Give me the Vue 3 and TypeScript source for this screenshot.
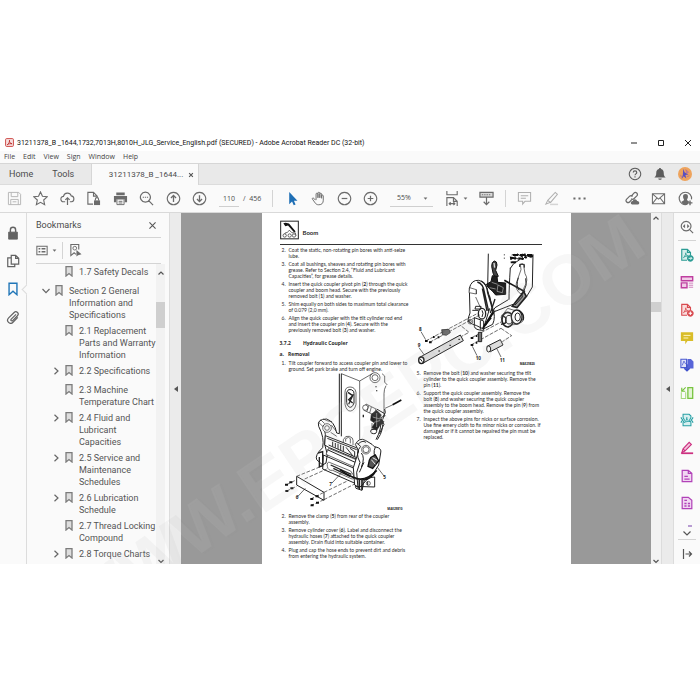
<script setup lang="ts">
import { ref } from 'vue'

interface Shape { d: string; fill?: string; stroke?: string; w?: number }
interface Tool { label: string; shapes: Shape[] }
interface Bookmark { text: string; level: number; arrow?: 'open' | 'closed' }
interface Step { n: number; html: string }

const G = '#6b6b6b'
const line = (d: string, w = 1.1, stroke = G): Shape => ({ d, stroke, w })
const solid = (d: string, fill = G): Shape => ({ d, fill })
const ring = 'M8 1.4a6.6 6.6 0 1 0 .01 0z'

const fileTools: Tool[] = [
  { label: 'Save', shapes: [line('M1.5 1.5h11l2 2v11h-13zM4.500 1.500v4.500h7v-4.500M4 14.500v-5.500h8v5.500M6 11.500h4', 1, '#b4b4b4')] },
  { label: 'Star', shapes: [line('M8 1l2.1 4.600 5 .6-3.700 3.400 1 5L8 12.100l-4.400 2.500 1-5L.9 6.200l5-.6z', 1.2)] },
  { label: 'Share to cloud', shapes: [line('M5.5 11.500H4a2.900 2.900 0 0 1-.3-5.800A4.300 4.300 0 0 1 12 5.200a3.200 3.200 0 0 1 .3 6.300h-1.800', 1.2), line('M8 15V7.500M5.700 9.500L8 7.200l2.300 2.300', 1.3)] },
  { label: 'Protect file', shapes: [line('M7.5 14h-5.500v-12.500h6l4 4v1.500M8 1.500V5.500h4', 1.2), solid('M8.5 10h6.500v5h-6.500z'), line('M10 10V8.800a1.700 1.700 0 0 1 3.400 0V10', 1.2)] },
  { label: 'Print', shapes: [solid('M3.500 1.500h9v3h-9zM1 5.200h14v6.800H12.500V9h-9v3H1z'), line('M4.200 9v5.500h7.600V9M6 11h4M6 12.800h4', 1)] },
  { label: 'Find', shapes: [line('M6.800 1.300a5.300 5.300 0 1 0 .01 0zM10.600 10.600l4.400 4.400', 1.3), solid('M4 6h1.300v1.300H4zM6.200 6h1.300v1.300H6.200zM8.400 6h1.300v1.300H8.400z')] },
  { label: 'Previous page', shapes: [line(ring, 1.2), line('M8 11.600V5M5.300 7.400L8 4.700l2.700 2.700', 1.4)] },
  { label: 'Next page', shapes: [line(ring, 1.2), line('M8 4.400V11M5.300 8.600L8 11.300l2.700-2.700', 1.4)] }
]
const viewTools: Tool[] = [
  { label: 'Select', shapes: [solid('M4.500 1v13l3-2.800 1.800 4 2-.9-1.800-3.900h3.800z', '#1f6fb5')] },
  { label: 'Hand', shapes: [line('M4.800 9.800L3 7.800C2 6.800.9 7.800 1.600 8.800l3 4.100c.9 1.300 2 1.800 3.700 1.800 3.300 0 4.800-1.900 4.800-4.800V5.300c0-1.300-1.800-1.300-1.800 0V8M11.300 7V3.300c0-1.300-1.900-1.300-1.900 0V7.500M9.400 7V2.300c0-1.300-2-1.300-2 0V7.500M7.400 7V3.200c0-1.300-2-1.300-2 0L5.400 9.500', 1)] },
  { label: 'Zoom out', shapes: [line(ring, 1.2), line('M5 8h6', 1.3)] },
  { label: 'Zoom in', shapes: [line(ring, 1.2), line('M5 8h6M8 5v6', 1.3)] }
]
const markTools: Tool[] = [
  { label: 'Comment', shapes: [line('M1.500 1.500h13v9.500H8.500l-2.500 3V11H1.500zM4 5h8M4 7.800h5.500', 1.1, '#b0b0b0')] },
  { label: 'Highlight', shapes: [line('M4 10L12 1.500l2.300 2-7.300 8.700zM4 10l-2 4L7 12', 1.1, '#b0b0b0'), line('M6.500 14.300h8.500', 1.6, '#d4d4d4')] },
  { label: 'More', shapes: [solid('M1.500 7h2.200v2H1.500zM6.900 7h2.200v2H6.900zM12.300 7h2.200v2h-2.200z')] }
]
const shareTools: Tool[] = [
  { label: 'Share link', shapes: [line('M7 9.500L4.800 11.700a2 2 0 0 1-3-3L5 5.500a2.100 2.100 0 0 1 3.200.3M6.500 5.800L9.500 2.300a2.100 2.100 0 0 1 3.100 2.900L9.500 8.300a2.100 2.100 0 0 1-3 0', 1.3), solid('M7.500 14.500a2 2 0 0 1 .6-3.900 2.600 2.600 0 0 1 4.900 0 2 2 0 0 1 .8 3.900z')] },
  { label: 'Mail', shapes: [line('M1.500 3h13v10.500h-13zM1.500 3L8 8.700 14.500 3M1.500 13.500l4.800-6M14.500 13.500L9.700 7.500', 1.1)] },
  { label: 'Add person', shapes: [line('M10 14.200A6.600 6.600 0 1 1 14.400 9', 1.2), solid('M8 3.300c2 0 2.800 1.400 2.600 3.200-.1 1.300-.6 1.900-.9 2.300v1l2 1-1 3c-3 1.300-5.200.4-7.300-2.200l2.900-1.700v-1.100c-.5-.5-.9-1.200-.9-2.300C5.200 4.700 6 3.300 8 3.300z'), line('M10.200 12.700h5.200M12.800 10.100v5.200', 1.5)] }
]

const acrobat = 'M4 11c2-2 3-5 2.600-5.500-.8 1 1 3.500 3 3.700-2-.2-4 .3-5.600 1.800z'
const sheetCorner = 'M8 14H2V1.500h6.500L12 5v3M8.500 1.500V5H12'
const railTools: Tool[] = [
  { label: 'Export PDF', shapes: [{ d: sheetCorner, fill: '#d5eeeb', stroke: '#2b9c94', w: 1.3 }, line(acrobat, 1, '#2b9c94'), solid('M11.800 8a3.800 3.800 0 1 0 .01 0z', '#2b9c94'), line('M9.800 11.800h3.600M12 10.200l1.600 1.600L12 13.400', 1, '#fff')] },
  { label: 'Organize', shapes: [{ d: 'M1.500 2h13v4.500h-13zM1.500 9h6.500v5.500H1.500z', fill: '#f1cde7', stroke: '#bf3fa0', w: 1.6 }, line('M10 9.300h5M10 11.700h5M10 14h5', 1.1, '#cf7dbb')] },
  { label: 'Create PDF', shapes: [{ d: sheetCorner, fill: '#f9dcdc', stroke: '#d84a4f', w: 1.3 }, line(acrobat, 1, '#d84a4f'), solid('M11.800 8a3.800 3.800 0 1 0 .01 0z', '#d84a4f'), line('M9.800 11.800h4M11.800 9.800v4', 1.2, '#fff')] },
  { label: 'Comment', shapes: [solid('M1 1.500h14v10H8.500L6 15v-3.500H1z', '#d9bd28'), line('M4 5h8M4 8h5.500', 1.1, '#fff7c8')] },
  { label: 'Combine', shapes: [{ d: 'M1 1.500h6.500v9.500H1z', fill: '#dfe1f8', stroke: '#4a5ad0', w: 1.2 }, line('M2.500 8.500l2-5L6.500 7', 0.9, '#4a5ad0'), solid('M8.500 1h4l2.900 2.900v8H8.500z', '#5764d8'), line('M8 7v7M5 11.500L8 14.500l3-3', 1.9, '#4052cc')] },
  { label: 'Compare', shapes: [{ d: 'M9 1.800h5.500v12.400H9z', fill: '#e2f4d4', stroke: '#79c442', w: 1.5 }, line('M6.500 7v7.200H1.500V7', 1.2, '#a5d97d'), line('M6.500 1.500L2.500 5.500M2 2v4h4', 1.4, '#79c442')] },
  { label: 'Compress', shapes: [{ d: 'M3.500 5V1.500h7l2 2V5l-1.500 3 1.500 3v3.500h-9V11L5 8z', fill: '#d8f0f0', stroke: '#27a0a5', w: 1.2 }, line('M1 5l2 3-2 3M15 5l-2 3 2 3', 1.3, '#27a0a5'), line('M4.800 11c2-1.500 3.200-4.500 3-6-.6 2 1 4.300 3.600 4.700-2-.3-4.600 0-6.600 1.300z', 1, '#27a0a5')] },
  { label: 'Fill and sign', shapes: [{ d: 'M2 13.500l1.500-4.500L10.500 1.500l2.500 2.500-7.500 7.500zM3.500 9l2.500 2.500', fill: '#f4c6dc', stroke: '#cc3080', w: 1.3 }, line('M1.500 14h13.500', 2, '#cc3080')] },
  { label: 'Edit form', shapes: [{ d: 'M2.500 1.500h7L13.500 5v9.500h-11zM9.500 1.500V5h4', fill: '#f1d7f2', stroke: '#b142b8', w: 1.4 }, line('M5 8.500h4M5 11.500h6', 1.5, '#b142b8')] },
  { label: 'Prepare form', shapes: [{ d: 'M2.500 1.500h7L13.500 5v9.500h-11z', fill: '#f1d7f2', stroke: '#b142b8', w: 1.4 }, line('M5 5h3M5 8.500h2.500M9 8.500h2.500M5 11.500h2.500M9 11.500h2.500', 1.6, '#b142b8')] }
]

const bookmarks: Bookmark[] = [
  { text: '1.7 Safety Decals', level: 2 },
  { text: 'Section 2 General\nInformation and\nSpecifications', level: 1, arrow: 'open' },
  { text: '2.1 Replacement\nParts and Warranty\nInformation', level: 2 },
  { text: '2.2 Specifications', level: 2, arrow: 'closed' },
  { text: '2.3 Machine\nTemperature Chart', level: 2 },
  { text: '2.4 Fluid and\nLubricant\nCapacities', level: 2, arrow: 'closed' },
  { text: '2.5 Service and\nMaintenance\nSchedules', level: 2, arrow: 'closed' },
  { text: '2.6 Lubrication\nSchedule', level: 2, arrow: 'closed' },
  { text: '2.7 Thread Locking\nCompound', level: 2 },
  { text: '2.8 Torque Charts', level: 2, arrow: 'closed' }
]

const couplerSteps: Step[] = [
  { n: 2, html: 'Coat the static, non-rotating pin bores with anti-seize<br>lube.' },
  { n: 3, html: 'Coat all bushings, sheaves and rotating pin bores with<br>grease. Refer to Section 2.4, “Fluid and Lubricant<br>Capacities”, for grease details.' },
  { n: 4, html: 'Insert the quick coupler pivot pin (<b>2</b>) through the quick<br>coupler and boom head. Secure with the previously<br>removed bolt (<b>1</b>) and washer.' },
  { n: 5, html: 'Shim equally on both sides to maximum total clearance<br>of 0.079 (2,0 mm).' },
  { n: 6, html: 'Align the quick coupler with the tilt cylinder rod end<br>and insert the coupler pin (<b>4</b>). Secure with the<br>previously removed bolt (<b>3</b>) and washer.' }
]
const removalFirst: Step[] = [
  { n: 1, html: 'Tilt coupler forward to access coupler pin and lower to<br>ground. Set park brake and turn off engine.' }
]
const removalRest: Step[] = [
  { n: 2, html: 'Remove the clamp (<b>5</b>) from rear of the coupler<br>assembly.' },
  { n: 3, html: 'Remove cylinder cover (<b>6</b>). Label and disconnect the<br>hydraulic hoses (<b>7</b>) attached to the quick coupler<br>assembly. Drain fluid into suitable container.' },
  { n: 4, html: 'Plug and cap the hose ends to prevent dirt and debris<br>from entering the hydraulic system.' }
]
const pinSteps: Step[] = [
  { n: 5, html: 'Remove the bolt (<b>10</b>) and washer securing the tilt<br>cylinder to the quick coupler assembly. Remove the<br>pin (<b>11</b>).' },
  { n: 6, html: 'Support the quick coupler assembly. Remove the<br>bolt (<b>8</b>) and washer securing the quick coupler<br>assembly to the boom head. Remove the pin (<b>9</b>) from<br>the quick coupler assembly.' },
  { n: 7, html: 'Inspect the above pins for nicks or surface corrosion.<br>Use fine emery cloth to fix minor nicks or corrosion. If<br>damaged or if it cannot be repaired the pin must be<br>replaced.' }
]

const pageNumber = ref('110')
const zoom = ref('55%')
</script>

<template>
  <div class="desk">
    <main class="app">
      <header class="titlebar">
        <svg class="logo" viewBox="0 0 16 16"><rect x="1" y="1" width="14" height="14" rx="2" fill="#f7dede" stroke="#c9403c" stroke-width="1.6" /><path d="M4 12c3-2 4.500-6 4-8-1 3 1.500 6 4.500 6.300C9.500 9.700 6.500 10.300 4 12z" fill="none" stroke="#b3201c" stroke-width="1.4" /></svg>
        <h1>31211378_B _1644,1732,7013H,8010H_JLG_Service_English.pdf (SECURED) - Adobe Acrobat Reader DC (32-bit)</h1>
        <div class="winbtns">
          <button aria-label="Minimize"><svg viewBox="0 0 8 8"><path d="M1 4h6" /></svg></button>
          <button aria-label="Maximize"><svg viewBox="0 0 8 8"><path d="M1.500 1.500h5v5h-5z" /></svg></button>
          <button aria-label="Close window"><svg viewBox="0 0 8 8"><path d="M1 1l6 6M7 1L1 7" /></svg></button>
        </div>
      </header>

      <nav class="menubar">
        <button v-for="m in ['File', 'Edit', 'View', 'Sign', 'Window', 'Help']" :key="m">{{ m }}</button>
      </nav>

      <div class="tabs">
        <button class="tab">Home</button>
        <button class="tab tools">Tools</button>
        <div class="doctab">
          <span>31211378_B _1644...</span>
          <button aria-label="Close tab"><svg viewBox="0 0 8 8"><path d="M1.500 1.500l5 5M6.500 1.500l-5 5" /></svg></button>
        </div>
        <div class="account">
          <button aria-label="Help"><svg viewBox="0 0 16 16"><path d="M8 1.500a6.500 6.500 0 1 0 .01 0z" fill="none" stroke="#5c5c5c" stroke-width="1.2" /><path d="M6 6.300c0-2.600 4-2.600 4 0 0 1.500-2 1.600-2 3.200M8 10.700v1.400" fill="none" stroke="#5c5c5c" stroke-width="1.3" /></svg></button>
          <button aria-label="Notifications"><svg viewBox="0 0 16 16"><path d="M8 1.200c.8 0 1.200.5 1.200 1.200 2.200.6 3.100 2.300 3.100 4.600 0 2.600.7 3.500 2.200 5H1.500c1.500-1.500 2.200-2.400 2.200-5 0-2.300.9-4 3.100-4.600 0-.7.4-1.200 1.200-1.200zM6 13h4c0 2.200-4 2.200-4 0z" fill="#5c5c5c" /></svg></button>
          <button aria-label="Profile"><svg viewBox="0 0 16 16"><circle cx="8" cy="8" r="8" fill="#eea35c" /><path d="M6 2l1.500 4L12 8.500 8.500 9l1 4-3-2.500L4 14l1.500-5z" fill="#5a4fc0" /><path d="M9 3l3 3-2 1zM3 9l1 3M10 11l3-1" stroke="#b66f8f" fill="#c98bb0" /></svg></button>
        </div>
      </div>

      <div class="toolbar">
        <div class="group files">
          <button v-for="t in fileTools" :key="t.label" :aria-label="t.label">
            <svg viewBox="0 0 16 16"><path v-for="(s, i) in t.shapes" :key="i" :d="s.d" :fill="s.fill || 'none'" :stroke="s.stroke || 'none'" :stroke-width="s.w" /></svg>
          </button>
        </div>
        <input v-model="pageNumber" class="pageno" aria-label="Page number">
        <span class="total">/&nbsp; 456</span>
        <i class="sep"></i>
        <div class="group views">
          <button v-for="t in viewTools" :key="t.label" :aria-label="t.label">
            <svg viewBox="0 0 16 16"><path v-for="(s, i) in t.shapes" :key="i" :d="s.d" :fill="s.fill || 'none'" :stroke="s.stroke || 'none'" :stroke-width="s.w" /></svg>
          </button>
        </div>
        <div class="zoombox">
          <select v-model="zoom" aria-label="Zoom level"><option>55%</option><option>100%</option></select>
          <svg class="caret" viewBox="0 0 6 4"><path d="M.5.5h5L3 3.500z" /></svg>
        </div>
        <button class="fit" aria-label="Fit page">
          <svg viewBox="0 0 16 16"><path d="M2 0v4h11V0M2 16V7h7l4 4v5M9 7v4h4M4.500 13.500h6M6 12l-1.500 1.500L6 15M9 12l1.500 1.500L9 15" fill="none" stroke="#6b6b6b" stroke-width="1.2" /></svg>
          <svg class="caret" viewBox="0 0 6 4"><path d="M.5.5h5L3 3.500z" /></svg>
        </button>
        <button class="scrollmode" aria-label="Page display"><svg viewBox="0 0 16 16"><path d="M1 1.500h14v5H1z" fill="#d9d9d9" stroke="#6b6b6b" stroke-width="1.3" /><path d="M3 4h10" stroke="#6b6b6b" stroke-dasharray="1.500 1" /><path d="M8 6.500v8M5 11.500l3 3 3-3" fill="none" stroke="#6b6b6b" stroke-width="1.3" /></svg></button>
        <i class="sep"></i>
        <div class="group marks">
          <button v-for="t in markTools" :key="t.label" :aria-label="t.label">
            <svg viewBox="0 0 16 16"><path v-for="(s, i) in t.shapes" :key="i" :d="s.d" :fill="s.fill || 'none'" :stroke="s.stroke || 'none'" :stroke-width="s.w" /></svg>
          </button>
        </div>
        <div class="group share">
          <button v-for="t in shareTools" :key="t.label" :aria-label="t.label">
            <svg viewBox="0 0 16 16"><path v-for="(s, i) in t.shapes" :key="i" :d="s.d" :fill="s.fill || 'none'" :stroke="s.stroke || 'none'" :stroke-width="s.w" /></svg>
          </button>
        </div>
      </div>

      <div class="body">
        <nav class="leftrail">
          <button aria-label="Security"><svg viewBox="0 0 16 16"><path d="M3 7h10v8H3z" fill="#636363" stroke="#636363" stroke-linejoin="round" /><path d="M5 7V4.500a3 3 0 0 1 6 0V7" fill="none" stroke="#636363" stroke-width="1.6" /></svg></button>
          <button aria-label="Pages"><svg viewBox="0 0 16 16"><path d="M6 1.500h5L14.500 5v6.500H6zM11 1.500V5h3.500M6 4.500H2v10h8v-3" fill="none" stroke="#636363" stroke-width="1.4" /></svg></button>
          <button class="current" aria-label="Bookmarks"><svg viewBox="0 0 16 16"><path d="M3.500 1.500h9v13L8 10.500l-4.500 4z" fill="none" stroke="#2176b8" stroke-width="1.600" /></svg></button>
          <button aria-label="Attachments"><svg viewBox="0 0 16 16"><path d="M11.500 5L6 10.500c-1.200 1.200.4 2.800 1.600 1.600l5.500-5.500c2.500-2.600-1.200-6.200-3.800-3.800L3 9c-3.500 3.600 1.500 8.400 5 5l5.500-5.500" fill="none" stroke="#636363" stroke-width="1.400" /></svg></button>
        </nav>

        <aside class="panel">
          <div class="panelhead">
            <h2>Bookmarks</h2>
            <button aria-label="Close panel"><svg viewBox="0 0 8 8"><path d="M.5.5l7 7M7.500.5l-7 7" /></svg></button>
          </div>
          <div class="paneltools">
            <button class="options" aria-label="Options">
              <svg viewBox="0 0 14 12"><path d="M1 1h12v10H1z" fill="none" stroke="#6b6b6b" stroke-width="1.2" /><path d="M3 4h2M3 7.500h2M6.500 4h4.500M6.500 7.500h4.500" stroke="#6b6b6b" stroke-width="1.6" /></svg>
              <svg class="caret" viewBox="0 0 6 4"><path d="M.5.5h5L3 3.500z" /></svg>
            </button>
            <button class="findmark" aria-label="Find bookmark"><svg viewBox="0 0 14 16"><path d="M10.500 7V1.500H2v12l3.500-3 2 1.700" fill="none" stroke="#6b6b6b" stroke-width="1.2" /><circle cx="6.2" cy="5.5" r="2" fill="none" stroke="#6b6b6b" /><path d="M8 7.500v7l1.800-1.500 3.700-1z" fill="#6b6b6b" /></svg></button>
          </div>
          <div class="treewrap">
            <ul class="tree">
              <li v-for="b in bookmarks" :key="b.text" :class="'level' + b.level">
                <svg class="arrow" viewBox="0 0 8 8"><path v-if="b.arrow === 'open'" d="M.5 2l3.500 3.700L7.500 2" /><path v-else-if="b.arrow" d="M2.500.7L6 4 2.500 7.300" /></svg>
                <svg class="mark" viewBox="0 0 8 11"><path d="M1 .7h6v9.300L4 7.500 1 10z" /></svg>
                <a href="#">{{ b.text }}</a>
              </li>
            </ul>
            <div class="scroll side">
              <svg viewBox="0 0 8 8"><path d="M1.500 5.500L4 3l2.500 2.500" /></svg>
              <i class="thumb"></i>
              <svg viewBox="0 0 8 8"><path d="M1.500 3L4 5.500 6.500 3" /></svg>
            </div>
          </div>
        </aside>
        <button class="splitter" aria-label="Collapse bookmarks"><svg viewBox="0 0 4 6"><path d="M4 0v6L0 3z" /></svg></button>

        <section class="canvas">
          <article class="sheet">
            <div class="sheethead">
              <svg viewBox="0 0 57 57"><rect x="2" y="2" width="53" height="53" fill="#fff" stroke="#222" stroke-width="3" /><path d="M10 8l6 9 8-2 18 20 5-2-20-24-10-2z" fill="#111" /><path d="M11 46l5-9 6-1 6-7 8 8h10l2 9" fill="none" stroke="#222" stroke-width="2" /><circle cx="14" cy="45" r="5" fill="#fff" stroke="#222" stroke-width="2" /><circle cx="29" cy="45" r="5" fill="#fff" stroke="#222" stroke-width="2" /><circle cx="42" cy="45" r="5" fill="#fff" stroke="#222" stroke-width="2" /></svg>
              <h3>Boom</h3>
            </div>
            <div class="columns">
              <div class="col">
                <ol><li v-for="s in couplerSteps" :key="s.n"><span>{{ s.n }}.</span><p v-html="s.html"></p></li></ol>
                <h4><span>3.7.2</span>Hydraulic Coupler</h4>
                <h5><span>a.</span>Removal</h5>
                <ol><li v-for="s in removalFirst" :key="s.n"><span>{{ s.n }}.</span><p v-html="s.html"></p></li></ol>
                <svg class="fig one" viewBox="60 10 372 417" fill="none" stroke="#222" stroke-width="2">
                  <path d="M238 12V192M244 12V200" stroke-width="3" />
                  <path d="M244 12l55 22 38-22M299 34V210M378 48q-6 10-6 24v60M366 12q12 6 8 16t8 18M336 160v20" />
                  <circle cx="345" cy="24" r="15" /><circle cx="345" cy="24" r="9" /><path d="M348 50v3M350 62v3M310 135v8" stroke-width="4" />
                  <path d="M255 68q0-16 15-16t18 16v36q-4 18-16 20t-17-20z" /><path d="M260 68q4-12 14-8t8 12v28q-6 16-14 12t-8-14z" stroke-width="3" /><path d="M264 68l14 10-12 12 12 10M266 104l14-30" stroke-width="4" />
                  <path d="M375 116l26-12" /><path d="M398 105l26-14" stroke-width="5" stroke="#111" />
                  <path d="M318 103l30 15-6 18-30-14z" fill="#fff" /><circle cx="316" cy="114" r="8" fill="#fff" /><path d="M326 108l-5 17M334 112l-5 18" />
                  <path d="M334 134l16-12 14 14-6 10 14 10-14 14-8 12-14-8 8-14-12-8z" fill="#222" /><path d="M338 142l22 6M342 158l20-6M350 130v42" stroke="#aaa" />
                  <path d="M350 118l24 14-6 18M376 138l-14 6 10 20-14 28M334 180q-6 10 6 12t10-14zM366 150q8 28-14 60M362 150q4 26-14 60M374 118q6 10-4 22" stroke-width="3" />
                  <path d="M238 192l-8-2q-6-34-30-42-30 0-24 22 18 34 12 64-24 22-18 36l18 16 10-6 4-26-8-30q6-32-4-58" stroke-width="3" />
                  <circle cx="201" cy="175" r="13" fill="#fff" /><circle cx="201" cy="175" r="7" /><path d="M176 158l14 14M182 150l12 12M190 148l14 6 12 2M212 188l18 12M214 166l14 18" />
                  <path d="M250 222v-12q6-14 18-10t11 12v14" /><path d="M257 216v-9q10-8 14 0v14" />
                  <path d="M196 198l98 38v34l-86-36-14-8z" fill="#fff" stroke-width="3" /><path d="M202 206l88 34M206 226l84 38M218 216v14M226 220v14M234 222v16M242 225v18M250 229v17M270 236l14 10v14M258 233l20 25" stroke-width="3" />
                  <path d="M206 236l82 34v24l-90-40z" fill="#fff" /><path d="M202 240l88 40M190 256l102 44v44l-104-46z" stroke-width="3" /><path d="M208 278q-8-2-6 12t16 12l58 26q10 0 4-12l-8-12z" /><path d="M212 286l62 28M220 296l50 24" stroke-width="4" />
                  <path d="M286 224q12-22 30-12l20 12q8 10 12 8 18 4 14 18l-6 36-20 32q-16 10-26 24l-12 12-14-8-4-52 16-50z" fill="#fff" stroke-width="3" />
                  <path d="M294 224q12-14 24-6M290 220l12 10q-18 20-2 48l-10 30 4 48M346 232q-10 22 6 40M304 292q12-28 0-42M312 278l-14 30" stroke-width="3" />
                  <circle cx="318" cy="240" r="13" /><circle cx="318" cy="240" r="9" /><path d="M332 264l14-8 10 18-18 22-14-6 4-18z" fill="#555" stroke="#111" stroke-width="4" /><path d="M334 270l12 14M338 264l14 8" stroke="#eee" stroke-width="3" />
                  <path d="M286 326q34 10 64-24M240 300q40 30 72 30 22-2 34-24" stroke-width="5" stroke="#111" />
                  <path d="M286 350l58 2v-30l-30 4-8 36-18-6z" stroke-width="3" /><path d="M306 328v32M298 330v28" stroke-width="5" /><circle cx="325" cy="341" r="6" /><path d="M323 336v10" stroke-width="3" />
                  <path d="M174 250l14-4v42l-12 4M178 262v28" stroke-width="4" />
                  <path d="M110 320l82 48v24l-82-46z" fill="#fff" stroke-width="3" /><path d="M110 320l74-30M134 328l66-30M192 368l74-36M192 390l90-46M80 345l30-15M80 364l30-14M152 388l40-20M152 408l40-18" stroke-dasharray="11 5" />
                  <path d="M75 345h9M88 338h9M76 364h9M91 356h9M151 388h9M167 380h9M152 407h9M168 399h9" stroke="#111" stroke-width="6" />
                  <path d="M136 356l-24 26M216 340l28-30M352 293l20 26" />
                  <g class="callout"><text x="107" y="388">6</text><text x="208" y="348">7</text><text x="370" y="328">5</text><text class="code" x="382" y="422">MAE29810</text></g>
                </svg>
                <ol><li v-for="s in removalRest" :key="s.n"><span>{{ s.n }}.</span><p v-html="s.html"></p></li></ol>
              </div>
              <div class="col second">
                <svg class="fig two" viewBox="24 54 372 342" fill="none" stroke="#222" stroke-width="2">
                  <path d="M244 56l-2 100M292 58v3M292 68v3" stroke-width="3" /><path d="M310 98q-4 60-4 96M314 60l10-2v10l14 6-18 12-10 14M330 56l16 10M346 56v18l12-12 16 6M378 58l-2 98-18 30" stroke-width="3" />
                  <path d="M312 68l12 2v12h-10zM334 70l18 2M352 56l6 14M364 62l14 2M318 60h60" stroke="#111" stroke-width="6" stroke-dasharray="16 5" />
                  <path d="M340 88q8-6 10 4l4 24q12 18-2 40l-8 22q-20-10-16-34l14-40z" fill="#fff" /><path d="M338 96v-8h14v10M334 128q-8 24 2 38M356 130q6 20-6 40" stroke-width="3" />
                  <path d="M262 78q8 0 8 12l-4 16 8 18-10 4-6-14-4-20q0-14 8-16z" fill="#444" stroke="#111" stroke-width="3" /><path d="M261 84l2 14" stroke="#ddd" stroke-width="4" />
                  <path d="M256 122l14 2 2 18 24 2v34l-30 2-10-12-10-8-8-12 14-8z" fill="#202020" stroke="#111" stroke-width="3" /><path d="M273 150l16 8-3 15-16-4zM254 142l18 6M248 158l18 4" stroke="#bbb" />
                  <path d="M292 136l62 34" stroke="#111" stroke-width="5" /><path d="M350 170l8 14-28 34-14-4z" fill="#999" stroke-width="5" /><path d="M344 174l2 12-22 24M304 194l-40 24-36 58M318 208l-56 22-34 50M250 238l-18 42" stroke-width="3" />
                  <path d="M187 160q6-26 28-24 22 4 28 34l14 48q10 28 0 50l-28 14-20-10q-28-8-26-20l6-18z" fill="#fff" stroke-width="3" /><path d="M211 141q18 4 22 34l12 54M222 138q18 8 20 36l14 46M226 160l14 68M247 182l12 56M264 192l-14 42" stroke-width="4" />
                  <path d="M188 158l20 6v13l-22-4z" fill="#fff" /><path d="M208 164v13M206 186l18 40" />
                  <ellipse cx="225" cy="236" rx="11" ry="16" fill="#fff" stroke-width="4" /><path d="M225 226q6 8 0 20M206 214h16v8h-18zM196 226h18" stroke-width="3" />
                  <circle cx="190" cy="260" r="7" /><circle cx="190" cy="260" r="3" /><path d="M202 248l28 10v28q-26 0-28-12zM220 256v28M248 220l-16 52M264 226l-28 46" stroke-width="3" /><path d="M258 232L228 280M252 248l-20 24" stroke="#111" stroke-width="6" />
                  <path d="M282 246l20-26 40 12q12 10 4 28l-14 8-26 2-18-6z" fill="#fff" /><ellipse cx="302" cy="254" rx="17" ry="22" fill="#fff" stroke-width="5" /><ellipse cx="306" cy="254" rx="9" ry="13" stroke-width="3" /><ellipse cx="329" cy="246" rx="16" ry="21" fill="#fff" stroke-width="4" /><ellipse cx="332" cy="246" rx="8" ry="12" stroke-width="3" /><path d="M284 240l12 8v16l-14 4M336 226q18 12 12 30" stroke-width="4" />
                  <path d="M56 318l154-82M68 322l150-82M164 274l22 18-22 12M194 308l90-48M192 330l90-50M282 280l32 22-28 18" stroke-dasharray="12 4" />
                  <path d="M104 284l22-1 4 10-12 8-12-2z" fill="#666" /><path d="M54 318h8M78 306h5M66 322h8M92 307h5M191 309h8M206 303h5M191 330h8M206 323h5" stroke="#111" stroke-width="6" />
                  <path d="M36 368L160 300l9 17-122 68q-12-4-11-17z" fill="#ddd" stroke-width="3" /><ellipse cx="43" cy="376" rx="8" ry="10" fill="#fff" stroke-width="4" /><path d="M40 372l6 8" stroke-width="3" /><path d="M94 348h5M127 331h5M154 313h5" stroke-width="3" />
                  <path d="M214 292h10v28h-10z" fill="#777" stroke-width="3" /><path d="M240 334l40-20 8 16-38 20q-10-4-10-16z" fill="#ddd" stroke-width="3" /><ellipse cx="245" cy="342" rx="6" ry="9" fill="#fff" stroke-width="3" />
                  <path d="M42 290l14 24M36 338l16 22M196 334l14 28M270 342l12 24" />
                  <g class="callout"><text x="36" y="287">8</text><text x="32" y="336">9</text><text x="206" y="375">10</text><text x="278" y="382">11</text><text class="code" x="338" y="391">MAE29820</text></g>
                </svg>
                <ol><li v-for="s in pinSteps" :key="s.n"><span>{{ s.n }}.</span><p v-html="s.html"></p></li></ol>
              </div>
            </div>
          </article>
        </section>
        <div class="scroll main">
          <svg viewBox="0 0 8 8"><path d="M1.500 5.500L4 3l2.500 2.500" /></svg>
          <i class="thumb"></i>
          <svg viewBox="0 0 8 8"><path d="M1.500 3L4 5.500 6.500 3" /></svg>
        </div>
        <button class="splitter" aria-label="Collapse tools"><svg viewBox="0 0 4 6"><path d="M4 0v6L0 3z" /></svg></button>

        <nav class="rightrail">
          <button class="search" aria-label="Search tools"><svg viewBox="0 0 16 16"><path d="M7 1.500a5.500 5.500 0 1 0 .01 0zM11 11l4 4" fill="none" stroke="#6b6b6b" stroke-width="1.3" /><path d="M5.800 4.500v5L3.200 7zM8.200 4.500v5L10.800 7z" fill="#6b6b6b" /></svg></button>
          <div class="railtools">
            <button v-for="t in railTools" :key="t.label" :aria-label="t.label">
              <svg viewBox="0 0 16 16"><path v-for="(s, i) in t.shapes" :key="i" :d="s.d" :fill="s.fill || 'none'" :stroke="s.stroke || 'none'" :stroke-width="s.w" /></svg>
            </button>
          </div>
          <button class="more" aria-label="More tools"><svg viewBox="0 0 14 14"><path d="M8 2h4" stroke="#a27cc4" stroke-width="1.5" /><path d="M3.500 7.500L7 11l3.500-3.500" fill="none" stroke="#555" stroke-width="1.2" /></svg></button>
          <button class="expand" aria-label="Expand tools"><svg viewBox="0 0 14 14"><path d="M3.500 2v10M5.500 7h6M9 4.500L11.500 7 9 9.500" fill="none" stroke="#555" stroke-width="1.2" /></svg></button>
        </nav>
      </div>

      <svg class="watermark" viewBox="0 0 700 430"><g transform="translate(82 500) rotate(-34)"><text x="2" y="2" class="shade">WWW.EPCEPC.COM</text><text>WWW.EPCEPC.COM</text></g></svg>
    </main>
  </div>
</template>

<style>
body { margin: 0; background: #fff; }
</style>

<style scoped>
* { box-sizing: border-box; }
.desk { height: 100vh; padding: 134px 0 136px; background: #fff; font-family: Roboto, "Liberation Sans", sans-serif; color: #4b4b4b; }
.app { position: relative; display: flex; flex-direction: column; height: 100%; overflow: hidden; }
button { display: flex; align-items: center; justify-content: center; padding: 0; border: 0; background: none; font: inherit; color: inherit; }
h1, h2, h3, h4, h5, p, ol, ul { margin: 0; padding: 0; font-weight: 400; list-style: none; }
svg { display: block; flex: none; }

.titlebar { display: flex; align-items: center; height: 17px; flex: none; padding: 0 8px 0 5px; gap: 3px; }
.logo { width: 9px; height: 9px; }
.titlebar h1 { flex: 1; font: 7px/12px Roboto, sans-serif; color: #111; white-space: nowrap; }
.winbtns { display: flex; gap: 19px; }
.winbtns svg { width: 8px; height: 8px; fill: none; stroke: #222; stroke-width: 1; }

.menubar { display: flex; align-items: center; gap: 8px; height: 12px; flex: none; padding: 0 4px; background: #fafafa; font: 7px/12px "Open Sans", sans-serif; color: #444; }

.tabs { display: flex; height: 22px; flex: none; background: #e9e9e9; border-top: 1px solid #d6d6d6; border-bottom: 1px solid #dcdcdc; font-size: 9px; }
.tab { padding: 0 9px; }
.tools { padding: 0 17px 0 10px; }
.doctab { display: flex; align-items: center; justify-content: flex-end; gap: 5px; width: 108px; margin-bottom: -1px; padding-right: 4px; background: #fafafa; border-left: 1px solid #d6d6d6; border-right: 1px solid #d6d6d6; font-size: 8px; white-space: nowrap; }
.doctab svg { width: 6px; height: 6px; stroke: #555; stroke-width: 1.5; }
.account { display: flex; align-items: center; gap: 11px; margin-left: auto; padding-right: 8px; }
.account svg { width: 14px; height: 14px; }

.toolbar { display: flex; align-items: center; height: 28px; flex: none; padding: 0 6px 0 5px; background: #fafafa; border-bottom: 1px solid #d9d9d9; font: 7px/12px "Open Sans", sans-serif; }
.group { display: flex; justify-content: space-between; }
.group button { width: 18px; height: 18px; }
.group svg { width: 15px; height: 15px; }
.files { width: 204px; }
.views { width: 97px; margin-left: 10px; }
.marks { width: 73px; margin-left: 9px; }
.share { width: 71px; margin-left: auto; }
.pageno { width: 20px; height: 17px; margin-left: 10px; padding: 0 0 0 4px; border: 0; border-bottom: 1px solid #cfcfcf; background: none; font: inherit; color: inherit; }
.total { width: 28px; padding-left: 4px; }
.sep { width: 1px; height: 17px; background: #d4d4d4; margin-left: 5px; }
.zoombox { display: flex; align-items: center; width: 43px; height: 17px; margin-left: 10px; padding-right: 5px; border-bottom: 1px solid #cfcfcf; }
.zoombox select { flex: 1; min-width: 0; padding: 0 0 0 7px; border: 0; background: none; appearance: none; font: inherit; color: inherit; }
.caret { width: 5px; height: 3px; fill: #6b6b6b; }
.fit { width: 24px; gap: 3px; margin-left: 11px; }
.fit svg:first-child { width: 15px; height: 15px; }
.scrollmode { width: 18px; margin-left: 9px; }
.scrollmode svg { width: 15px; height: 15px; }
.scrollmode + .sep { margin-left: 10px; }

.body { display: flex; flex: 1; min-height: 0; }
.leftrail { display: flex; flex-direction: column; gap: 14px; align-items: center; width: 27px; flex: none; padding-top: 13px; background: #fafafa; border-right: 1px solid #dcdcdc; }
.leftrail svg { width: 14px; height: 14px; }
.leftrail button { position: relative; width: 26px; height: 14px; }
.current::after { content: ""; position: absolute; right: -4px; top: 4px; width: 6px; height: 6px; background: #fafafa; border-left: 1px solid #dcdcdc; border-bottom: 1px solid #dcdcdc; transform: rotate(45deg); }

.panel { display: flex; flex-direction: column; width: 142px; flex: none; background: #fafafa; }
.panelhead { display: flex; align-items: center; justify-content: space-between; height: 25px; flex: none; margin: 0 8px 0 9px; padding-right: 5px; border-bottom: 1px solid #d4d4d4; }
.panelhead h2 { font-size: 9px; }
.panelhead svg { width: 7px; height: 7px; stroke: #555; stroke-width: 1.2; }
.paneltools { display: flex; align-items: center; height: 26px; flex: none; margin: 0 8px 0 9px; border-bottom: 1px solid #d4d4d4; }
.options { gap: 4px; padding-right: 5px; height: 17px; border-right: 1px solid #d4d4d4; }
.options svg:first-child { width: 12px; height: 11px; }
.findmark { padding-left: 6px; }
.findmark svg { width: 13px; height: 15px; }
.treewrap { display: flex; flex: 1; min-height: 0; }
.tree { display: flex; flex-direction: column; gap: 4px; flex: 1; min-width: 0; padding-top: 1px; overflow: hidden; }
.tree li { display: flex; flex: none; align-items: flex-start; min-height: 15px; padding-left: 25px; }
.tree .level1 { padding-left: 15px; }
.tree a { color: #555; font-size: 9px; line-height: 12px; text-decoration: none; white-space: pre; padding-top: 1px; margin-bottom: -1px; }
.arrow { width: 8px; height: 8px; margin: 3px 5px 0 0; fill: none; stroke: #666; stroke-width: 1.2; }
.mark { width: 8px; height: 11px; margin: 1px 6px 0 0; fill: #dedede; stroke: #7c7c7c; stroke-width: 1.3; }

.scroll { display: flex; flex-direction: column; align-items: center; flex: none; background: #f2f2f2; }
.scroll svg { width: 8px; height: 8px; fill: none; stroke: #555; stroke-width: 1.2; }
.scroll svg:last-child { margin-top: auto; margin-bottom: -1px; }
.thumb { width: 100%; background: #cfcfcf; }
.side { width: 9px; margin-right: 4px; padding-top: 5px; }
.side .thumb { height: 26px; margin-top: 25px; }
.main { width: 10px; padding-top: 1px; }
.main .thumb { height: 10px; margin-top: 80px; }
.splitter { width: 12px; flex: none; background: #ebebeb; border-left: 1px solid #dcdcdc; }
.splitter svg { width: 4px; height: 6px; fill: #555; }

.canvas { display: flex; justify-content: center; flex: 1; min-width: 0; background: #999; overflow: hidden; }
.sheet { width: 309px; flex: none; padding: 7px 29px 0 18px; background: #fff; color: #2b2b2b; font: 5px/6px "Open Sans", sans-serif; }
.sheethead { display: flex; align-items: center; gap: 4px; height: 25px; border-bottom: 1px solid #333; padding-bottom: 4px; }
.sheethead svg { width: 19px; height: 20px; }
.sheethead h3 { padding-top: 6px; font: 700 6px/6px Lato, sans-serif; }
.columns { display: grid; grid-template-columns: 135px 1fr; }
.col { padding-top: 2px; white-space: nowrap; }
.second { padding-top: 8px; }
ol { display: grid; gap: 2px; font-family: Lato, sans-serif; }
ol li { display: grid; grid-template-columns: 7px 1fr; padding-left: 2px; }
.second ol { margin-top: 3px; }
h4, h5 { display: flex; font: 700 5px/6px "Open Sans", sans-serif; }
h4 { gap: 12px; margin-top: 7px; }
h5 { gap: 4px; margin: 5px 0 3px; }
.fig { overflow: visible; }
.one { width: 124px; height: 139px; margin: 1px 0; }
.two { width: 124px; height: 114px; }
.callout { fill: #222; stroke: none; font: 700 14px "Open Sans", sans-serif; }
.code { font-size: 9px; }

.rightrail { display: flex; flex-direction: column; align-items: center; width: 27px; flex: none; background: #fafafa; border-left: 1px solid #dcdcdc; }
.rightrail svg { width: 14px; height: 14px; }
.search { width: 18px; height: 28px; flex: none; border-bottom: 1px solid #d4d4d4; }
.railtools { display: flex; flex-direction: column; flex: 1; }
.railtools button { flex: 1; width: 18px; }
.more { width: 18px; height: 23px; padding-top: 6px; border-bottom: 1px solid #d4d4d4; flex: none; }
.expand { height: 24px; padding-top: 3px; flex: none; }

.watermark { position: absolute; left: 0; top: 0; width: 100%; height: 100%; pointer-events: none; }
.watermark text { font: 700 70px "Liberation Sans", sans-serif; fill: #fff; fill-opacity: .06; }
.watermark .shade { fill: #888; fill-opacity: .07; }
</style>
